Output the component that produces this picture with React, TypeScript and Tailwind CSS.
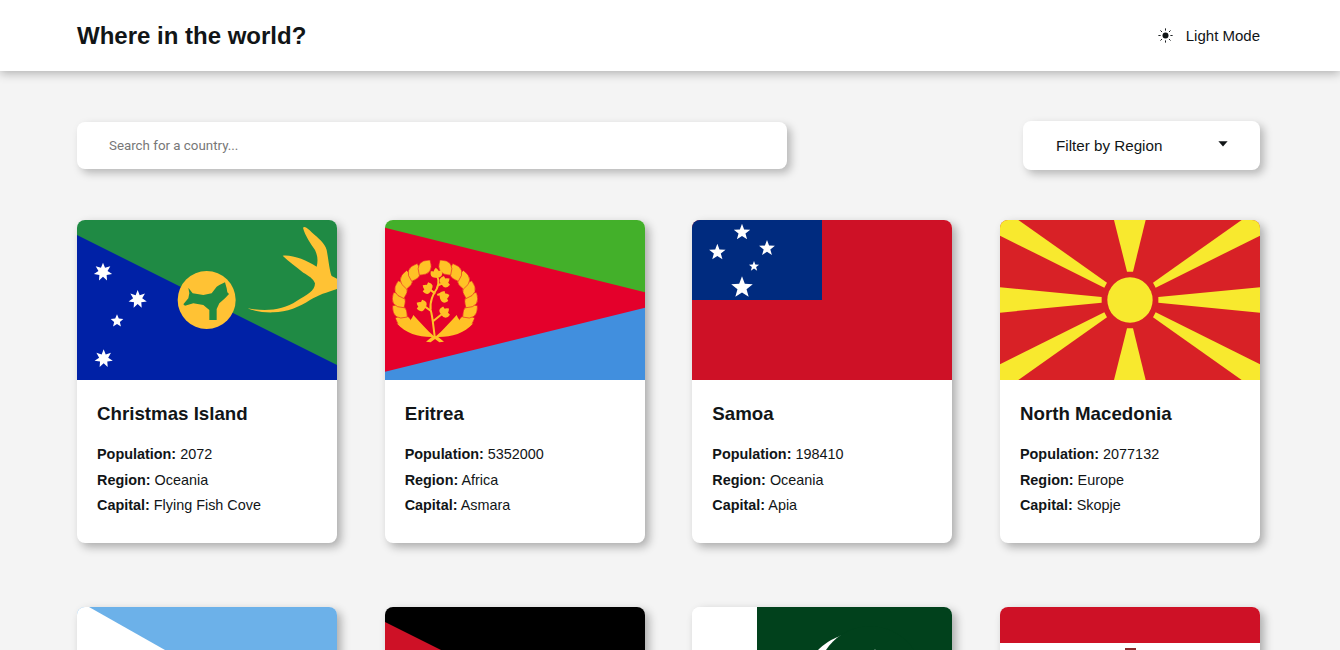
import React from 'react';

interface Country {
  name?: string;
  population?: number;
  region?: string;
  capital?: string;
  flag: React.ReactNode;
}

const star = (cx: number, cy: number, r: number, points: number, inner: number) => {
  const pts: string[] = [];
  for (let i = 0; i < points * 2; i++) {
    const rad = i % 2 === 0 ? r : r * inner;
    const a = (Math.PI * i) / points - Math.PI / 2;
    pts.push(`${(cx + rad * Math.cos(a)).toFixed(1)},${(cy + rad * Math.sin(a)).toFixed(1)}`);
  }
  return pts.join(' ');
};

const FlagSvg: React.FC<{ viewBox: string; children: React.ReactNode }> = ({ viewBox, children }) => (
  <svg viewBox={viewBox} className="block w-full h-40" preserveAspectRatio="none">
    {children}
  </svg>
);

const ChristmasIsland = () => (
  <FlagSvg viewBox="21 15 780 480">
    <rect x="21" y="15" width="780" height="480" fill="#1f8a44" />
    <polygon points="21,60 801,450 801,495 21,495" fill="#0021a6" />
    <polygon points={star(99, 171, 28, 7, 0.5)} fill="#fff" />
    <polygon points={star(203, 253, 28, 7, 0.5)} fill="#fff" />
    <polygon points={star(141, 318, 20, 5, 0.45)} fill="#fff" />
    <polygon points={star(101, 431, 28, 7, 0.5)} fill="#fff" />
    <circle cx="410" cy="255" r="87" fill="#ffc234" />
    <polygon
      points="355,218 368,235 400,240 425,235 440,215 448,210 465,202 470,220 472,232 477,237 465,250 448,265 440,282 440,315 418,315 418,285 400,270 370,265 345,272 340,268 355,250 358,235"
      fill="#1f8a44"
    />
    <path
      d="M533 280 C590 290 640 285 680 258 C710 240 735 228 735 205 C730 190 715 182 700 173 C680 155 655 140 638 122 C665 118 710 135 740 155 C745 135 742 120 735 105 C722 85 705 62 699 38 C705 32 715 42 725 52 C745 70 765 85 770 105 C775 130 778 165 785 183 L801 191 L801 222 C770 232 745 240 720 255 C690 275 650 292 610 292 C580 293 550 288 533 280 Z"
      fill="#ffc234"
    />
  </FlagSvg>
);

const Leaf: React.FC<{ x: number; y: number; rot: number; len: number; w: number; stroke?: boolean }> = ({ x, y, rot, len, w, stroke }) => (
  <path
    d={`M0 0 Q${len / 2} ${-w} ${len} 0 Q${len / 2} ${w} 0 0 Z`}
    transform={`translate(${x} ${y}) rotate(${rot})`}
    fill="#ffc226"
    stroke={stroke ? '#e4002b' : undefined}
    strokeWidth={stroke ? 1.5 : undefined}
  />
);

const Sprig: React.FC<{ x: number; y: number; rot: number }> = ({ x, y, rot }) => (
  <>
    <Leaf x={x} y={y} rot={rot - 38} len={26} w={18} />
    <Leaf x={x} y={y} rot={rot} len={30} w={18} />
    <Leaf x={x} y={y} rot={rot + 38} len={26} w={18} />
  </>
);

const wreathAngles = [135, 152, 170, 187, 205, 222, 240];

const Eritrea = () => {
  const half = (
    <>
      {wreathAngles.map((deg) => {
        const rad = (deg * Math.PI) / 180;
        return (
          <Leaf
            key={deg}
            x={165 + 94 * Math.cos(rad)}
            y={262 + 94 * Math.sin(rad)}
            rot={deg + 65}
            len={56}
            w={38}
            stroke
          />
        );
      })}
      <path d="M50 325 C72 335 90 325 100 300 C120 322 140 345 165 366 C120 368 80 358 50 325 Z" fill="#ffc226" />
    </>
  );
  return (
    <FlagSvg viewBox="15 15 780 480">
      <rect x="15" y="15" width="780" height="240" fill="#43b02a" />
      <rect x="15" y="255" width="780" height="240" fill="#418fde" />
      <polygon points="15,38 795,232 795,278 15,470" fill="#e4002b" />
      {half}
      <g transform="matrix(-1 0 0 1 330 0)">{half}</g>
      <path
        d="M165 372 C160 335 158 305 152 285 C148 262 160 235 170 222 C178 205 180 190 165 175 M166 236 L150 224 M172 240 L185 235 M176 210 L188 205 M153 288 L134 274 M160 318 L185 298"
        stroke="#ffc226"
        strokeWidth="6"
        fill="none"
      />
      <Sprig x={170} y={188} rot={-95} />
      <Sprig x={154} y={226} rot={-150} />
      <Sprig x={184} y={208} rot={-35} />
      <Sprig x={180} y={250} rot={-20} />
      <Sprig x={136} y={278} rot={-150} />
      <Sprig x={184} y={300} rot={-40} />
      <polygon points="138,380 158,364 172,364 192,380 178,382 165,372 152,382" fill="#ffc226" />
    </FlagSvg>
  );
};

const Samoa = () => (
  <FlagSvg viewBox="21 15 780 480">
    <rect x="21" y="15" width="780" height="480" fill="#ce1126" />
    <rect x="21" y="15" width="390" height="240" fill="#002b7f" />
    <polygon points={star(171, 52, 26, 5, 0.42)} fill="#fff" />
    <polygon points={star(97, 112, 26, 5, 0.42)} fill="#fff" />
    <polygon points={star(246, 100, 25, 5, 0.42)} fill="#fff" />
    <polygon points={star(207, 154, 16, 5, 0.42)} fill="#fff" />
    <polygon points={star(171, 218, 34, 5, 0.42)} fill="#fff" />
  </FlagSvg>
);

const NorthMacedonia = () => (
  <FlagSvg viewBox="15 15 780 480">
    <rect x="15" y="15" width="780" height="480" fill="#d82126" />
    <g fill="#f8e92e">
      <polygon points="357,15 452,15 414,170 396,170" />
      <polygon points="357,495 452,495 414,340 396,340" />
      <polygon points="15,217 320,246 320,263 15,293" />
      <polygon points="795,217 490,246 490,263 795,293" />
      <polygon points="15,15 70,15 336,203 328,218 15,62" />
      <polygon points="795,15 740,15 474,203 482,218 795,62" />
      <polygon points="15,495 70,495 336,307 328,292 15,448" />
      <polygon points="795,495 740,495 474,307 482,292 795,448" />
      <circle cx="405" cy="255" r="68" />
    </g>
  </FlagSvg>
);

const BlueDiagonal = () => (
  <FlagSvg viewBox="0 0 260 160">
    <rect width="260" height="160" fill="#6cb1e9" />
    <polygon points="0,0 12,0 88,43 150,80 0,160" fill="#fff" />
  </FlagSvg>
);

const Jordan = () => (
  <FlagSvg viewBox="0 0 260 160">
    <rect width="260" height="53" fill="#000" />
    <rect y="53" width="260" height="54" fill="#fff" />
    <rect y="107" width="260" height="53" fill="#007a3d" />
    <polygon points="0,15 130,80 0,145" fill="#ce1126" />
  </FlagSvg>
);

const Pakistan = () => (
  <FlagSvg viewBox="0 0 260 160">
    <rect width="260" height="160" fill="#fff" />
    <rect x="65" width="195" height="160" fill="#01411c" />
    <circle cx="165" cy="80" r="53.7" fill="#fff" />
    <circle cx="178" cy="72" r="52.7" fill="#01411c" />
    <polygon points={star(192, 62, 22, 5, 0.42)} fill="#fff" transform="rotate(-25 192 62)" />
  </FlagSvg>
);

const RedWhite = () => (
  <FlagSvg viewBox="0 0 260 160">
    <rect width="260" height="160" fill="#fff" />
    <rect width="260" height="36" fill="#ce1126" />
    <rect y="124" width="260" height="36" fill="#ce1126" />
    <rect x="125" y="41" width="11" height="30" fill="#8a2a2b" />
  </FlagSvg>
);

const countries: Country[] = [
  { name: 'Christmas Island', population: 2072, region: 'Oceania', capital: 'Flying Fish Cove', flag: <ChristmasIsland /> },
  { name: 'Eritrea', population: 5352000, region: 'Africa', capital: 'Asmara', flag: <Eritrea /> },
  { name: 'Samoa', population: 198410, region: 'Oceania', capital: 'Apia', flag: <Samoa /> },
  { name: 'North Macedonia', population: 2077132, region: 'Europe', capital: 'Skopje', flag: <NorthMacedonia /> },
  { flag: <BlueDiagonal /> },
  { flag: <Jordan /> },
  { flag: <Pakistan /> },
  { flag: <RedWhite /> },
];

const SunIcon = () => (
  <svg viewBox="0 0 16 16" className="w-[15px] h-[15px]" fill="none">
    <circle cx="8" cy="8" r="3.2" fill="#111517" />
    <path
      d="M8 .4V2.8M8 13.2v2.4M.4 8H2.8M13.2 8h2.4M2.6 2.6l1.7 1.7M11.7 11.7l1.7 1.7M2.6 13.4l1.7-1.7M11.7 4.3l1.7-1.7"
      stroke="#111517"
      strokeWidth="1"
    />
  </svg>
);

const CountryCard: React.FC<{ country: Country }> = ({ country }) => {
  const { name, population, region, capital, flag } = country;
  return (
    <div className="h-[323px] bg-white rounded-lg overflow-hidden shadow-[4px_4px_10px_rgba(0,0,0,0.3)]">
      {flag}
      {name && (
        <div className="px-5 pt-[22px]">
          <h2 className="text-[18.72px] font-bold leading-6 mb-4">{name}</h2>
          <p className="text-[14.4px] leading-[25.5px]"><b>Population:</b> {population}</p>
          <p className="text-[14.4px] leading-[25.5px]"><b>Region:</b> {region}</p>
          <p className="text-[14.4px] leading-[25.5px]"><b>Capital:</b> {capital}</p>
        </div>
      )}
    </div>
  );
};

export default function App() {
  return (
    <div className="h-[650px] overflow-hidden bg-[#f4f4f4] text-[#111517] font-['Liberation_Sans',Arial,sans-serif]">
      <header className="h-[71px] bg-white flex items-center justify-between pl-[77px] pr-20 shadow-[0_2px_10px_rgba(0,0,0,0.3)] relative">
        <h1 className="text-2xl font-bold">Where in the world?</h1>
        <div className="flex items-center gap-[13px] text-[15px]">
          <SunIcon />
          <span className="pt-0.5">Light Mode</span>
        </div>
      </header>

      <main className="pl-[77px] pr-20 pt-[50px]">
        <div className="flex items-center justify-between">
          <input
            type="text"
            placeholder="Search for a country..."
            className="w-[710px] h-[47px] bg-white rounded-lg px-8 text-[13.33px] font-['Roboto',sans-serif] placeholder:text-[#777] outline-none shadow-[4px_4px_8px_rgba(0,0,0,0.25)]"
          />
          <div className="w-[237px] h-[49px] bg-white rounded-lg pl-[33px] pr-8 flex items-center justify-between text-[15.2px] shadow-[4px_4px_8px_rgba(0,0,0,0.25)]">
            <span className="pt-0.5">Filter by Region</span>
            <svg viewBox="0 0 10 6" className="w-[10px] h-[6px] -mt-[3px]">
              <path d="M0.4 0.3H9.6L5 5.6Z" fill="#111517" />
            </svg>
          </div>
        </div>

        <div className="grid grid-cols-[repeat(4,260px)] justify-between gap-y-16 mt-[50px]">
          {countries.map((c, i) => (
            <CountryCard key={i} country={c} />
          ))}
        </div>
      </main>
    </div>
  );
}
